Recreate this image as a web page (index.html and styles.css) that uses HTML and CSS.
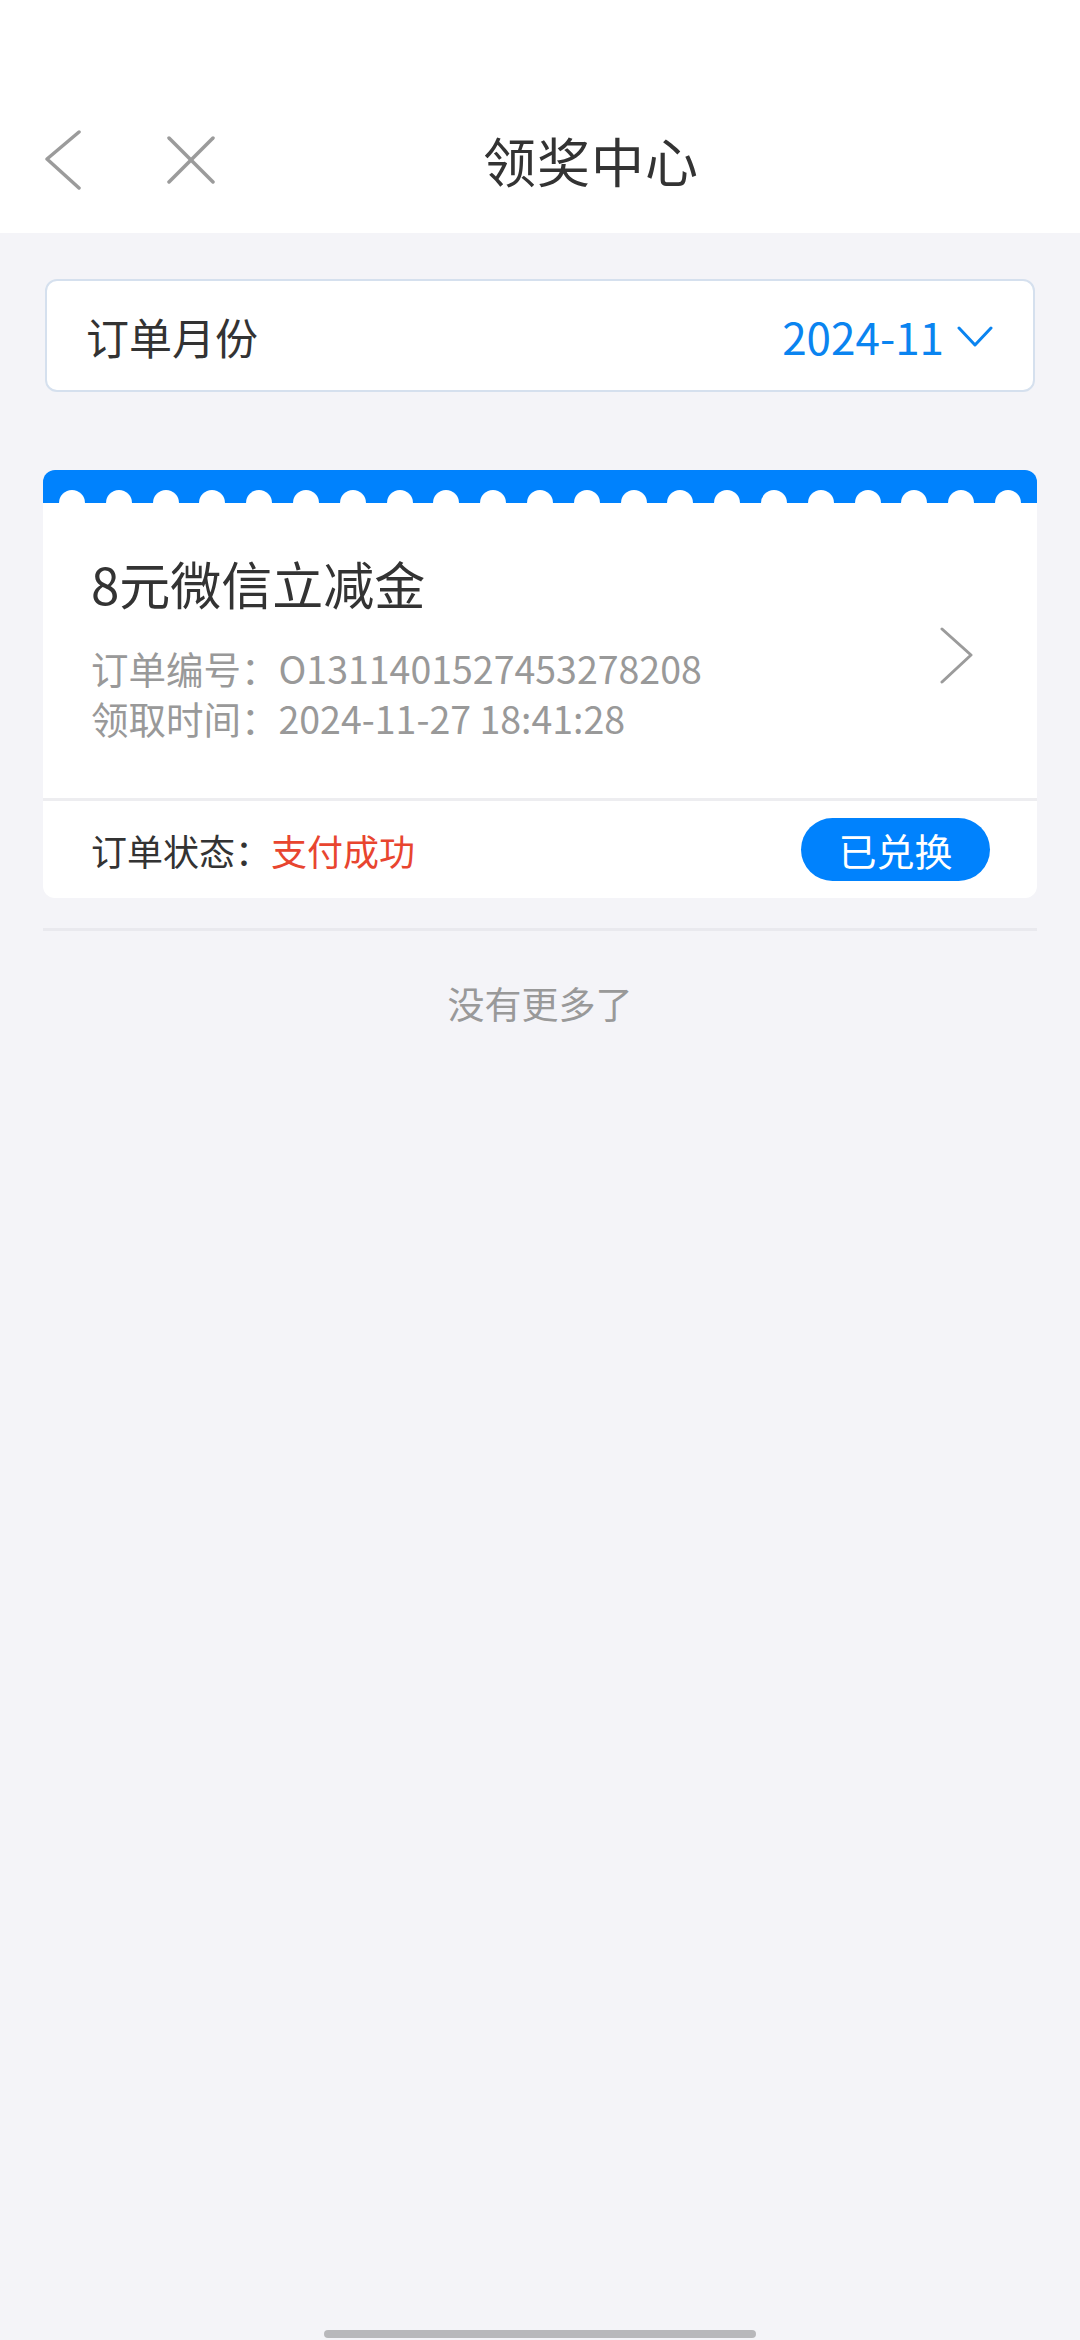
FILE: index.html
```html
<!DOCTYPE html>
<html lang="zh-CN">
<head>
  <meta charset="UTF-8" />
  <meta name="viewport" content="width=device-width, initial-scale=1.0" />
  <title>领奖中心</title>
  <link rel="stylesheet" href="styles.css">
</head>
<body>
  <header class="header">
    <nav class="nav">
      <div class="nav-left">
        <svg class="icon-back" width="40" height="60" viewBox="0 0 40 60">
          <polyline points="35,2 3,29 35,58" fill="none" stroke="#9b9b9b" stroke-width="3.5" stroke-linecap="round" stroke-linejoin="round"/>
        </svg>
        <svg class="icon-close" width="50" height="48" viewBox="0 0 50 48">
          <line x1="3" y1="2" x2="47" y2="46" stroke="#9b9b9b" stroke-width="3.5" stroke-linecap="round"/>
          <line x1="47" y1="2" x2="3" y2="46" stroke="#9b9b9b" stroke-width="3.5" stroke-linecap="round"/>
        </svg>
      </div>
      <h1 class="title">领奖中心</h1>
      <div></div>
    </nav>
  </header>

  <main class="content">
    <div class="month-box">
      <span class="month-label">订单月份</span>
      <span class="month-value">
        2024-11
        <svg width="36" height="22" viewBox="0 0 36 22">
          <polyline points="2,3 18,20 34,3" fill="none" stroke="#0a84f0" stroke-width="3" stroke-linecap="round" stroke-linejoin="round"/>
        </svg>
      </span>
    </div>

    <div class="card">
      <div class="card-band">
        <span></span><span></span><span></span><span></span><span></span><span></span><span></span>
        <span></span><span></span><span></span><span></span><span></span><span></span><span></span>
        <span></span><span></span><span></span><span></span><span></span><span></span><span></span>
      </div>
      <div class="card-body">
        <div class="card-info">
          <div class="card-title">8元微信立减金</div>
          <div class="card-line">订单编号：O1311401527453278208</div>
          <div class="card-line">领取时间：2024-11-27 18:41:28</div>
        </div>
        <svg class="card-arrow" width="36" height="58" viewBox="0 0 36 58">
          <polyline points="3,2 32,28 3,55" fill="none" stroke="#9b9b9b" stroke-width="3" stroke-linecap="round" stroke-linejoin="round"/>
        </svg>
      </div>
      <div class="card-status">
        <span class="status-label">订单状态：<span class="status-value">支付成功</span></span>
        <span class="status-btn">已兑换</span>
      </div>
    </div>

    <div class="no-more">没有更多了</div>
  </main>

  <div class="home-bar"></div>
</body>
</html>
```

FILE: styles.css
```css
body {
  margin: 0;
  min-height: 2340px;
  background-color: #f4f4f8;
  font-family: "Noto Sans CJK SC", "Noto Sans", sans-serif;
  color: #333;
}
.header {
  background-color: #fff;
  height: 233px;
  padding-top: 87px;
  box-sizing: border-box;
}
.nav {
  height: 146px;
  display: grid;
  grid-template-columns: 1fr auto 1fr;
  align-items: center;
}
.nav-left {
  display: flex;
  align-items: center;
  padding-left: 44px;
}
.icon-close {
  margin-left: 82px;
}
.title {
  margin: 0 0 0 102px;
  font-size: 53px;
  font-weight: 400;
  color: #333;
  letter-spacing: 1px;
}
.content {
  padding: 0 43px;
}
.month-box {
  margin: 46px 2px 0;
  height: 113px;
  box-sizing: border-box;
  border: 2px solid #d5e0ee;
  border-radius: 12px;
  background-color: #fff;
  display: flex;
  align-items: center;
  justify-content: space-between;
  padding: 0 40px 0 39px;
}
.month-label {
  font-size: 43px;
  color: #333;
}
.month-value {
  display: flex;
  align-items: center;
  gap: 13px;
  font-size: 44px;
  color: #0a84f0;
}
.card {
  margin-top: 78px;
  background-color: #fff;
  border-radius: 12px;
  overflow: hidden;
}
.card-band {
  height: 33px;
  background-color: #0082fd;
  display: flex;
  align-items: flex-end;
  justify-content: space-between;
  padding: 0 16px;
}
.card-band span {
  width: 26px;
  height: 13px;
  background-color: #fff;
  border-radius: 13px 13px 0 0;
}
.card-body {
  display: flex;
  align-items: center;
  padding: 45px 62px 55px 48px;
  border-bottom: 3px solid #ededf0;
}
.card-info {
  flex: 1;
}
.card-title {
  font-size: 51px;
  line-height: 70px;
  color: #333;
  margin-bottom: 25px;
}
.card-line {
  font-size: 37.5px;
  line-height: 50px;
  color: #999;
}
.card-arrow {
  margin-top: 20px;
}
.card-status {
  height: 97px;
  display: flex;
  align-items: center;
  justify-content: space-between;
  padding: 0 47px 0 48px;
}
.status-label {
  font-size: 36px;
  color: #333;
}
.status-value {
  color: #e8452f;
}
.status-btn {
  width: 189px;
  height: 63px;
  border-radius: 32px;
  background-color: #0082fd;
  color: #fff;
  font-size: 38px;
  display: flex;
  align-items: center;
  justify-content: center;
}
.no-more {
  margin-top: 30px;
  border-top: 3px solid #e9e9ee;
  padding-top: 47px;
  line-height: 50px;
  text-align: center;
  font-size: 37px;
  color: #999;
}
.home-bar {
  position: fixed;
  left: 324px;
  bottom: 2px;
  width: 432px;
  height: 8px;
  border-radius: 4px;
  background-color: #b8b8bb;
}
```
